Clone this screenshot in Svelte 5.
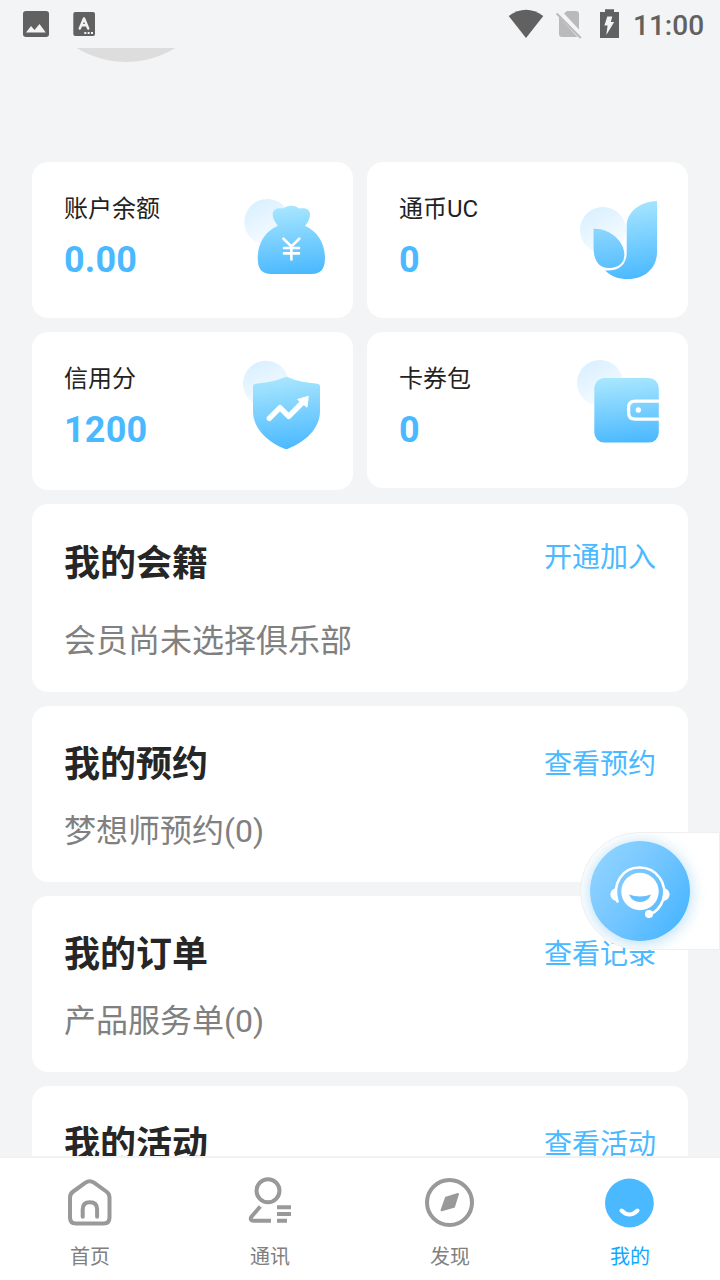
<script>
  const assets = [
    { icon: "money", label: "账户余额", value: "0.00" },
    { icon: "coin", label: "通币UC", value: "0" },
    { icon: "credit", label: "信用分", value: "1200" },
    { icon: "wallet", label: "卡券包", value: "0" },
  ];

  const sections = [
    { title: "我的会籍", link: "开通加入", text: "会员尚未选择俱乐部", tall: true },
    { title: "我的预约", link: "查看预约", text: "梦想师预约(0)" },
    { title: "我的订单", link: "查看记录", text: "产品服务单(0)" },
    { title: "我的活动", link: "查看活动" },
  ];

  const tabs = [
    { id: "home", label: "首页" },
    { id: "contact", label: "通讯" },
    { id: "discover", label: "发现" },
    { id: "mine", label: "我的" },
  ];

  const halos = {
    money: [27.3, 36],
    coin: [28, 44],
    credit: [26, 27.7],
    wallet: [25, 27],
  };

  let active = $state("mine");
</script>

<div class="screen">
  <header class="status">
    <svg width="100" height="48" viewBox="0 0 100 48">
      <rect x="23" y="11" width="26" height="26" rx="3" fill="#616161" />
      <path d="M26 32.4 31 26l3.5 4L39.500 24l6.300 8.400z" fill="#f3f4f6" />
      <rect x="73.300" y="12" width="21.700" height="24" rx="2" fill="#616161" />
      <path d="M79.800 28.500 84 18.500l4.200 10M81.500 25.300h5" fill="none" stroke="#f3f4f6" stroke-width="2.500" stroke-linecap="round" stroke-linejoin="round" />
      <path d="M84.300 33h8.700" stroke="#f3f4f6" stroke-width="2" stroke-dasharray="2 1.350" />
    </svg>
    <div class="status-right">
      <svg width="120" height="48" viewBox="505 0 120 48">
        <path d="M508.700 16q17.300-12.500 34.600 0L526 38z" fill="#616161" />
        <path d="M559 17v17q0 3 3 3h15.500zM564 13.500l3-2.500h9q3 0 3 3v15.500z" fill="#bababc" />
        <path d="M556.700 13.500 580.800 38" stroke="#bababc" stroke-width="2" />
        <path d="M600 12h5V9.200h9V12h5v26h-19z" fill="#616161" />
        <path d="M607.300 16.500h5l-1.500 5.500h3.400l-7.900 13 1.300-9.500h-3.200z" fill="#f3f4f6" />
      </svg>
      <span class="time">11:00</span>
    </div>
  </header>

  <main>
    <div class="avatar"></div>

    <div class="assets">
      {#each assets as item (item.icon)}
        <div class="asset {item.icon}">
          <div class="info">
            <span class="label">{item.label}</span>
            <strong>{item.value}</strong>
          </div>
          <svg width="96" height="100" viewBox="0 0 96 100">
            <defs>
              <linearGradient id="halo-{item.icon}" x1="0.2" y1="0" x2="0.7" y2="1">
                <stop offset="0" stop-color="#d8efff" />
                <stop offset="1" stop-color="#fafdff" />
              </linearGradient>
              <linearGradient id="fill-{item.icon}" x1="0.45" y1="0" x2="0.55" y2="1">
                <stop offset="0" stop-color="#a8e6fe" />
                <stop offset="1" stop-color="#4bb9ff" />
              </linearGradient>
            </defs>
            <circle cx={halos[item.icon][0]} cy={halos[item.icon][1]} r="23" fill="url(#halo-{item.icon})" />
            {#if item.icon === "money"}
              <path d="M37.700 39.700C35 36 32.700 32.500 32.700 28.500C32.700 23 38 21.500 43.500 22.500C47.500 18.800 55 18.800 59 22.500C65 21.500 70 23 70 28.500C70 32.500 68 36.500 65 39.700C77 45 85 57 85 72C85 83 80.500 88 72 88H31C22 88 17.700 83 17.700 72C17.700 57 25.500 45 37.700 39.700Z" fill="url(#fill-money)" />
              <path d="M43.500 52.700 51.400 60.500 59.300 52.700M51.400 60.500V73.500M44 62H59M44 67.400H59" fill="none" stroke="#fff" stroke-width="2.600" stroke-linecap="round" />
            {:else if item.icon === "coin"}
              <path d="M82 15V66C82 82 70 93 53 93C43.500 93 35.500 90.500 30.300 84.500C43 85.500 51.700 79 51.700 67V40C51.700 27 63 16 82 15Z" fill="url(#fill-coin)" />
              <path d="M18.700 42.700C36 42.700 49.300 56 49.300 69C49.300 77 43 82 34 82C26 82 18.700 77 18.700 62Z" fill="#6cc6ff" />
              <path d="M18.700 42.700C36 42.700 49.300 56 49.300 69C49.300 77 43 82 34 82C26 82 18.700 77 18.700 62Z" fill="url(#fill-coin)" opacity="0.5" />
            {:else if item.icon === "credit"}
              <path d="M44.500 21.300Q46.300 20.400 48.100 21.300Q60 26.500 77.500 27.700Q80 28 80 30.500V55C80 73 65 86 48 92.700Q46.300 93.400 44.600 92.700C28 86 13 73 13 55V30.500Q13 28 15.500 27.700Q32.500 26.500 44.500 21.300Z" fill="url(#fill-credit)" />
              <path d="M29.300 62.300 40 51.700 48.700 60.300 62 47" fill="none" stroke="#fff" stroke-width="5.400" stroke-linecap="round" stroke-linejoin="round" />
              <path d="M57.500 43.500 68.300 40.300 67 51.200Z" fill="#fff" stroke="#fff" stroke-linejoin="round" />
            {:else}
              <rect x="19.300" y="22" width="64.500" height="64.600" rx="10" fill="url(#fill-wallet)" />
              <path d="M85 45.200H60.500Q53.600 45.200 53.600 51.500V57Q53.600 63.200 60.500 63.200H85" fill="none" stroke="#fff" stroke-width="3.300" />
              <circle cx="63.300" cy="54" r="2.700" fill="#fff" />
            {/if}
          </svg>
        </div>
      {/each}
    </div>

    {#each sections as section (section.title)}
      <section class:tall={section.tall}>
        <div class="head">
          <h2>{section.title}</h2>
          <span class="link">{section.link}</span>
        </div>
        {#if section.text}
          <p>{section.text}</p>
        {/if}
      </section>
    {/each}
  </main>

  <nav>
    {#each tabs as tab (tab.id)}
      <button class:active={active === tab.id} onclick={() => (active = tab.id)}>
        <svg width="56" height="56" viewBox="0 0 56 56" fill="none" stroke="#999" stroke-width="4">
          {#if tab.id === "home"}
            <path d="M23.500 8.700 11.200 17.500Q8 19.800 8 23.500V43.500Q8 49.500 14 49.500H41.500Q47.500 49.500 47.500 43.500V23.500Q47.500 19.800 44.300 17.500L32 8.700Q27.700 5.700 23.500 8.700Z" />
            <path d="M20.700 42.800V35.200Q20.700 28.200 27.900 28.200T35.100 35.200V42.800" stroke-linecap="round" />
          {:else if tab.id === "contact"}
            <circle cx="26" cy="16.700" r="11.500" />
            <path d="M18.300 32.500 9.200 43Q7.700 46.700 11.500 46.700H29M35 33.300H49M35 40H49M35 46.700H45" />
          {:else if tab.id === "discover"}
            <circle cx="27.500" cy="28.500" r="22.500" />
            <path d="M24 23.700 36 20 32 32.700 19.500 36.300Z" fill="#999" stroke-width="2" stroke-linejoin="round" />
          {:else}
            <circle cx="27.400" cy="29" r="24.400" fill="#4ab9ff" stroke="none" />
            <path d="M19.500 36.500Q27.400 44.500 35.500 36.500" stroke="#fff" stroke-linecap="round" />
          {/if}
        </svg>
        <span>{tab.label}</span>
      </button>
    {/each}
  </nav>

  <div class="service">
    <div class="bubble">
      <svg width="100" height="100" viewBox="0 0 100 100">
        <path d="M27.500 60.500C22 43 32 26.500 49.500 26.500C67 26.500 78 43 73 59C70.500 66 66 71 60 73.500" fill="none" stroke="#fff" stroke-width="2.600" stroke-linecap="round" />
        <path d="M26 47C18.500 49 18.500 58 26 60zM74 47C81.500 49 81.500 58 74 60z" fill="#fff" />
        <circle cx="50" cy="50.500" r="18.700" fill="#fff" />
        <circle cx="59" cy="73" r="4" fill="#fff" />
        <path d="M39 53.500Q50 57.500 61 53.500Q58 61 50 61T39 53.500Z" fill="#66c0ff" />
      </svg>
    </div>
  </div>
</div>

<style>
  :global(body) {
    margin: 0;
  }

  .screen {
    position: relative;
    display: flex;
    flex-direction: column;
    width: 720px;
    height: 1280px;
    overflow: hidden;
    background: #f3f4f6;
    font-family: Roboto, "Noto Sans CJK SC", sans-serif;
  }

  svg {
    display: block;
    flex: none;
  }

  .status {
    display: flex;
    justify-content: space-between;
    height: 48px;
    flex: none;
  }

  .status-right {
    display: flex;
    width: 215px;
  }

  .time {
    margin-left: 8px;
    font-size: 28px;
    font-weight: 500;
    line-height: 52px;
    color: #616161;
  }

  main {
    flex: 1;
    min-height: 0;
    overflow: hidden;
    padding: 0 32px;
  }

  .avatar {
    width: 188px;
    height: 188px;
    margin: -174px 0 100px;
    border-radius: 50%;
    background: #ddd;
  }

  .assets {
    display: grid;
    grid-template-columns: 1fr 1fr;
    gap: 14px;
    align-items: start;
  }

  .asset {
    display: flex;
    justify-content: space-between;
    box-sizing: border-box;
    height: 156px;
    padding: 24px 17px 0 32px;
    border-radius: 16px;
    background: #fff;
  }

  .credit {
    height: 158px;
  }

  .info {
    display: flex;
    flex-direction: column;
  }

  .label {
    font-size: 24px;
    line-height: 46px;
    color: #222;
  }

  strong {
    margin-top: 6px;
    font-size: 36px;
    line-height: 44px;
    letter-spacing: 0.2px;
    color: #4ab9ff;
  }

  section {
    box-sizing: border-box;
    height: 176px;
    margin-top: 14px;
    padding: 34px 32px 0;
    border-radius: 16px;
    background: #fff;
  }

  .head {
    display: flex;
    align-items: center;
    justify-content: space-between;
    height: 50px;
  }

  h2 {
    margin: 0;
    font-size: 36px;
    line-height: 52px;
    color: #262626;
  }

  .link {
    font-size: 28px;
    line-height: 40px;
    color: #4ab9ff;
  }

  p {
    margin: 18px 0 0;
    font-size: 32px;
    line-height: 46px;
    color: #808080;
  }

  .tall {
    height: 188px;
  }

  .tall .head {
    align-items: flex-start;
  }

  .tall p {
    margin-top: 30px;
  }

  nav {
    display: flex;
    flex: none;
    height: 122px;
    border-top: 2px solid #f2f2f2;
    background: #fff;
  }

  button {
    flex: 1;
    display: flex;
    flex-direction: column;
    align-items: center;
    padding: 16px 0 0;
    border: 0;
    background: none;
    font-family: inherit;
    font-size: 20px;
    line-height: 30px;
    color: #808080;
  }

  button span {
    margin-top: 12px;
  }

  .active {
    color: #10a8ff;
  }

  /* floating customer service entry, docked to the right edge */
  .service {
    position: absolute;
    top: 832px;
    right: 0;
    box-sizing: border-box;
    width: 140px;
    height: 118px;
    padding: 8px 0 0 9px;
    overflow: hidden;
    border: 1px solid #efefef;
    border-radius: 59px 0 0 59px;
    background: #fff;
  }

  .bubble {
    width: 100px;
    height: 100px;
    border-radius: 50%;
    background: linear-gradient(125deg, #97d6ff, #72c5ff 50%, #43b4ff 95%);
    box-shadow: 0 2px 16px rgba(60, 165, 225, 0.4);
  }
</style>
